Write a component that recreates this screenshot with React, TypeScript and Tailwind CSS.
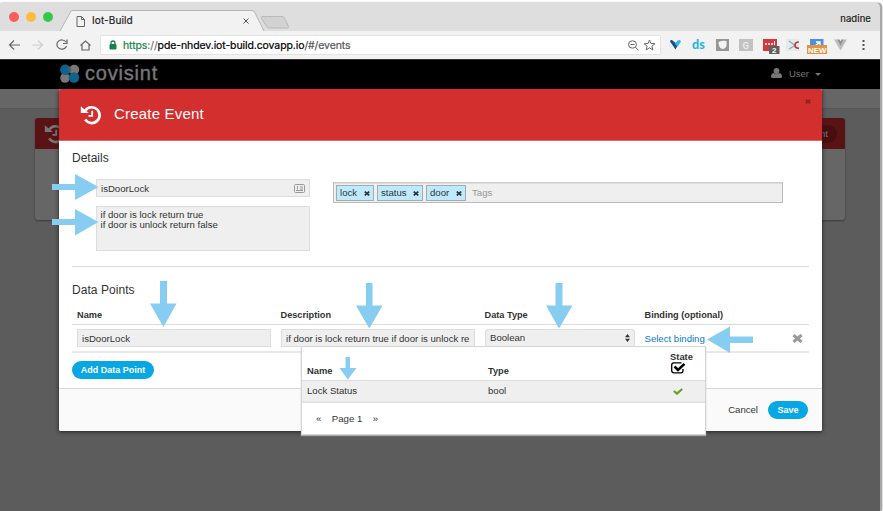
import type { ReactNode } from 'react'

const TAGS = [
  { label: 'lock', width: 'w-[38px]' },
  { label: 'status', width: 'w-[46px]' },
  { label: 'door', width: 'w-[40px]' },
]

// Callout arrows, drawn over the dialog
const ARROWS = [
  '52,184 75,184 75,174 98.5,187 75,200 75,190 52,190',
  '52,219 75,219 75,209 98.5,222 75,235.500 75,225 52,225',
  '160,281 167,281 167,303.500 176.500,303.500 163.500,327 150,303.500 160,303.500',
  '366,283 372.500,283 372.500,305.500 382.500,305.500 369.300,328.500 356,305.500 366,305.500',
  '555.500,283 562.500,283 562.500,305.500 572.500,305.500 559,328.500 546,305.500 555.500,305.500',
  '345.500,357 350,357 350,368 356.500,368 347.800,379.500 339.500,368 345.500,368',
  '707,339.500 730,326.500 730,336.500 753,336.500 753,343 730,343 730,353',
]

function HistoryIcon({ className }: { className?: string }) {
  return (
    <svg viewBox="0 0 22 20" className={className} fill="none" stroke="currentColor">
      <path d="M5.400 5.400A7.900 7.900 0 1 1 5.200 14.600" strokeWidth="2.700" />
      <path d="M.8 1.300v6.700h8z" fill="currentColor" stroke="none" />
      <path d="M12.200 5.800v5H8.500" strokeWidth="1.800" />
    </svg>
  )
}

function CloseIcon({ className }: { className?: string }) {
  return (
    <svg viewBox="0 0 12 10" className={className} fill="none" stroke="currentColor" strokeWidth="3.400">
      <path d="m1.500 1.200 9 7.600m0-7.600-9 7.600" />
    </svg>
  )
}

function BrowserTabs() {
  return (
    <div className="relative flex h-[28px] items-center bg-[#dedede] text-[10px] text-[#222]">
      <svg className="absolute inset-0 h-[28px] w-[300px]" viewBox="0 0 300 28" fill="none">
        <path d="M60 28 70.500 9Q71 7.500 73 7.500H252Q254 7.500 254.500 9L264 28z" fill="#f2f2f2" />
        <path d="M60 28 70.500 9Q71 7.500 73 7.500H252Q254 7.500 254.500 9L264 28" stroke="#b5b5b5" />
        <path d="M262 13.500h20q2 0 2.500 1.500l4 8.500q.5 1.500-1 1.500h-18q-2 0-3-1.500l-5-8q-.8-2 .5-2z" fill="#d2d2d2" stroke="#bababa" />
        <path d="M77 13.500h4.500l3 3v7H77zM81.500 13.500v3h3" stroke="#666" />
        <path d="m243.500 15.500 5 5m0-5-5 5" stroke="#555" />
      </svg>
      <div className="relative ml-[9px] flex gap-[7px]">
        <span className="size-[10px] rounded-full bg-[#fc5b57]" />
        <span className="size-[10px] rounded-full bg-[#fdbc40]" />
        <span className="size-[10px] rounded-full bg-[#34c84a]" />
      </div>
      <span className="relative ml-[39px] pt-[7px] tracking-[0.100px] [-webkit-text-stroke:0.2px]">Iot-Build</span>
      <span className="ml-auto mr-[9px] pt-[4px] text-[9.500px] tracking-[0.100px] [-webkit-text-stroke:0.2px]">nadine</span>
    </div>
  )
}

function Extensions() {
  return (
    <svg className="h-[28px] w-[219px] shrink-0" viewBox="661 31 219 28" fill="none">
      <path d="M671 41.500q0-2 2-1.500l3.500 3 2-1 1.500 1-3.500 6.500z" fill="#15538b" />
      <path d="m676 44 2.500-3.500q2.500-1.500 3.500 1l-3.500 5z" fill="#31b4e8" />
      <text x="693" y="49" fontFamily="Lato" fontWeight="900" fontSize="12.500" fill="#27b5e5">ds</text>
      <rect x="717" y="39" width="13" height="12" fill="#969696" />
      <path d="M719.500 42q4-2 8-1 1 8-4 8-4-1-4-7z" fill="#f3f3f3" />
      <rect x="740" y="39" width="14" height="12" fill="#c2c2c2" />
      <text x="743.500" y="48.500" fontFamily="Roboto" fontWeight="500" fontSize="9.500" fill="#eee">G</text>
      <rect x="764" y="39" width="14" height="12" fill="#d8383a" />
      <path d="M766 44h2m1 0h2m1 0h2" stroke="#f8d7d7" strokeWidth="2" />
      <path d="M775.500 41v4" stroke="#fff" />
      <rect x="770" y="46" width="10.500" height="8" fill="#606060" />
      <text x="773" y="53" fontFamily="Liberation Sans" fontWeight="700" fontSize="8" fill="#fff">2</text>
      <rect x="787" y="39" width="13" height="12" fill="#e3ebee" />
      <path d="m790 41 6 4.500m-6 3.500 6-3.500" stroke="#9ba9b2" strokeWidth="1.300" />
      <path d="M800 42q-4 0-4 3.300 0 3 4 3" stroke="#b93b3e" strokeWidth="1.700" />
      <rect x="811" y="39" width="13.500" height="8" fill="#4a91e5" />
      <path d="m816 46 5-4m-4 0h4v3" stroke="#fff" strokeWidth="1.300" />
      <rect x="808" y="45" width="20" height="9" fill="#e6913d" />
      <text x="809" y="52.500" fontFamily="Liberation Sans" fontWeight="700" fontSize="7.900" fill="#fff">NEW</text>
      <path d="M835 39.500h4l2.500 5 2.500-5h4l-6.500 11z" fill="#bcbcbc" />
      <path d="M838.500 39.500h2l1 2 1-2h2l-3 6z" fill="#8d8d8d" />
      <path d="M864.500 40v2m0 2v2m0 2v2" stroke="#555" strokeWidth="2" />
    </svg>
  )
}

function BrowserToolbar() {
  return (
    <div className="flex h-[29px] items-start border-b border-[#333] bg-[#f2f2f2]">
      <svg className="h-[28px] w-[101px] shrink-0" viewBox="0 31 101 28" fill="none" stroke="#666" strokeWidth="1.200">
        <path d="M20 45H9.500m4.500-4.500L9.500 45l4.500 4.500" />
        <path d="M32.500 45h10M38 40.500l4.500 4.500-4.500 4.500" stroke="#ccc" />
        <path d="M66 42a5 4.600 0 1 0 .6 4M67 39.500v4h-4" />
        <path d="m80.500 45.500 5-4.500 5 4.500M82 45v5h7v-5" />
      </svg>
      <div className="mt-[5px] flex h-[18px] w-[559px] items-center bg-white shadow-[0_0_1px_#999]">
        <svg className="ml-[8px] h-[10px] w-[8px]" viewBox="0 0 8 10">
          <path d="M1 4.500h6V9H1z" fill="#148444" stroke="#148444" />
          <path d="M2 4.500V3q0-2 2-2t2 2v1.500" fill="none" stroke="#148444" strokeWidth="1.300" />
        </svg>
        <span className="ml-[6px] pt-[1px] text-[10.500px] tracking-[-0.100px] text-black [-webkit-text-stroke:0.2px]">
          <span className="text-[#148444]">https</span>
          <span className="text-[#777]">://</span>pde-nhdev.iot-build.covapp.io<span className="text-[#555]">/#/events</span>
        </span>
        <svg className="ml-auto mr-[3px] h-[14px] w-[30px]" viewBox="0 0 30 14" fill="none" stroke="#666">
          <ellipse cx="5.500" cy="6.500" rx="4" ry="3.700" />
          <path d="M3.500 6.500h4M8.500 9.300l3 3" />
          <path d="m22.500 2 1.400 3.500 4 .2-3 2.500 1 3.800-3.400-2.200-3.400 2.200 1-3.800-3-2.500 4-.2z" />
        </svg>
      </div>
      <Extensions />
    </div>
  )
}

function AppNav() {
  return (
    <div className="flex h-[29px] items-center bg-black text-[#777]">
      <svg className="mb-[1px] ml-[59px] h-[20px] w-[21px]" viewBox="0 0 21 20">
        <circle cx="15.200" cy="5.700" r="5" fill="#777" />
        <circle cx="6" cy="14" r="4.800" fill="#777" />
        <circle cx="6.300" cy="5.800" r="5.200" fill="#0c648b" />
        <circle cx="15" cy="13.500" r="5.200" fill="#0c648b" />
        <path d="M10 2a5 5 0 0 1 1 7 5 5 0 0 1-1-7z" fill="#465f6a" />
      </svg>
      <span className="mb-[4px] ml-[5px] text-[20px] leading-none tracking-[0.800px] [-webkit-text-stroke:0.4px]">covisint</span>
      <div className="ml-auto mr-[59px] flex items-center">
        <svg className="mb-[3px] h-[10px] w-[11px]" viewBox="0 0 11 10" fill="currentColor">
          <ellipse cx="5.500" cy="3" rx="2.900" ry="3" />
          <path d="M2.500 5q3 2.200 6 0Q11 5.500 11 8.500q0 1.500-1.500 1.500h-8Q0 10 0 8.500 0 5.500 2.500 5z" />
        </svg>
        <span className="ml-[7px] text-[9.500px]">User</span>
        <svg className="ml-[6px] h-[3px] w-[6px]" viewBox="0 0 6 3" fill="currentColor">
          <path d="M0 0h6L3 3z" />
        </svg>
      </div>
    </div>
  )
}

function Field({ className, children }: { className: string; children: ReactNode }) {
  return (
    <div className={`flex h-[18px] items-center overflow-hidden whitespace-nowrap border border-[#ddd] bg-[#efefef] px-[4px] ${className}`}>
      {children}
    </div>
  )
}

function BindingMenu() {
  return (
    <div className="absolute left-[242px] top-[257px] h-[89px] w-[405px] border border-[#d5d5d5] bg-white shadow-[0_1px_1px_#aaa]">
      <div className="flex h-[34px] border-b border-[#ddd] pl-[5px] font-bold">
        <span className="w-[181px] pt-[18px] text-[9.400px]">Name</span>
        <span className="w-[182px] pt-[18px] text-[9.200px]">Type</span>
        <div className="flex flex-col pt-[4px] leading-[11px]">
          <span className="text-[9.400px]">State</span>
          <svg className="h-[12px] w-[16px]" viewBox="0 0 16 12" fill="none" stroke="#000">
            <path d="M13 7v1.500q0 2.300-2 2.300H4Q1.700 10.800 1.700 8.500v-5.500Q1.700 .8 4 .8h7.500" strokeWidth="1.300" />
            <path d="m4.500 4.500 3.500 3.500L14.500 1.800" strokeWidth="2.500" />
          </svg>
        </div>
      </div>
      <div className="flex h-[22px] items-center border-b-2 border-[#e3e3e3] bg-[#efefef] pl-[5px]">
        <span className="w-[181px]">Lock Status</span>
        <span className="w-[185px]">bool</span>
        <svg className="mt-[1px] h-[7px] w-[10px]" viewBox="0 0 10 7" fill="none" stroke="#62a420" strokeWidth="2.200">
          <path d="m.8 3 3.200 2.600L9.200 1" />
        </svg>
      </div>
      <div className="flex items-center gap-[10.500px] pl-[14px] pt-[10px]">
        <span>«</span>
        <span>Page 1</span>
        <span>»</span>
      </div>
    </div>
  )
}

function CreateEventDialog() {
  return (
    <div className="absolute left-[59px] top-[89px] flex h-[342px] w-[763px] flex-col rounded-[2px] bg-white text-[9.600px] leading-[12px] text-[#333] shadow-[0_1px_4px_#222]">
      <div className="flex h-[52px] items-center rounded-t-[2px] border-b border-[#dd6868] bg-[#d32f2f] text-white">
        <HistoryIcon className="ml-[21px] h-[20px] w-[22px]" />
        <h1 className="mb-[3px] ml-[12px] text-[15px] leading-none tracking-[0.200px]">Create Event</h1>
        <CloseIcon className="mb-[27px] ml-auto mr-[11px] h-[5px] w-[6px] text-[#902020]" />
      </div>

      <div className="flex h-[247px] flex-col px-[13px]">
        <h2 className="mt-[10px] text-[12px] leading-[14px]">Details</h2>
        <div className="mt-[14px] flex h-[72px] items-start">
          <div className="ml-[24px] w-[214px]">
            <Field className="w-[214px] justify-between pt-[1px]">
              isDoorLock
              <svg className="mb-[1px] h-[9px] w-[11px]" viewBox="0 0 11 9" fill="none" stroke="#999">
                <rect x=".5" y=".5" width="10" height="8" rx="1" />
                <path d="M6 3h3M6 5h3M2 6.500h7M3.500 2v3.500" />
              </svg>
            </Field>
            <div className="mt-[9px] h-[45px] w-[214px] border border-[#ddd] bg-[#efefef] px-[3.500px] pt-[3px] leading-[10px]">
              if door is lock return true
              <br />
              if door is unlock return false
            </div>
          </div>
          <div className="ml-[23px] mt-[3px] flex h-[21px] w-[450px] items-center gap-[3px] border border-[#bbb] border-t-[#ccc] bg-[#efefef] pl-[2px] shadow-[inset_0_1px_0_#ddd]">
            {TAGS.map((tag) => (
              <span key={tag.label} className={`flex h-[16px] items-center justify-between border border-[#aaa] bg-[#bdeaff] pl-[3px] pr-[3px] ${tag.width}`}>
                {tag.label}
                <CloseIcon className="mt-[2px] h-[5px] w-[6px]" />
              </span>
            ))}
            <span className="ml-[3px] text-[#999]">Tags</span>
          </div>
        </div>

        <div className="mt-[15px] border-t border-[#ddd]" />
        <h2 className="mt-[16px] text-[12px] leading-[14px] tracking-[0.050px]">Data Points</h2>
        <div className="mt-[12px] flex h-[16px] items-start border-b border-[#ddd] pl-[5px] text-[9.200px] font-bold">
          <span className="w-[203.500px]">Name</span>
          <span className="w-[204px]">Description</span>
          <span className="w-[160px]">Data Type</span>
          <span>Binding (optional)</span>
        </div>
        <div className="flex h-[28px] items-start border-b-2 border-[#e8e8e8] pl-[5px] pt-[4px]">
          <Field className="w-[194px] pt-[1px]">isDoorLock</Field>
          <Field className="ml-[10px] w-[194px] pt-[1px]">if door is lock return true if door is unlock re</Field>
          <Field className="ml-[10px] w-[150px] justify-between rounded-[3px]">
            Boolean
            <svg className="h-[8px] w-[5px]" viewBox="0 0 5 8" fill="#333">
              <path d="M2.500 0 5 3.200H0zM2.500 8 0 4.800h5z" />
            </svg>
          </Field>
          <a className="ml-[9.500px] mt-[4px] text-[#0b78d0]">Select binding</a>
          <CloseIcon className="ml-auto mr-[6px] mt-[5px] h-[9px] w-[11px] text-[#999]" />
        </div>
        <button className="mt-[8px] h-[18px] w-[82px] shrink-0 rounded-full bg-[#06a7e4] text-[9px] font-bold text-white">Add Data Point</button>
      </div>

      <div className="flex flex-1 items-center justify-end gap-[10px] rounded-b-[2px] border-t border-[#d8d8d8] bg-[#fafafa] pr-[14px]">
        <button className="pb-[1px]">Cancel</button>
        <button className="h-[18px] w-[40px] rounded-full bg-[#06a7e4] text-[9px] font-bold text-white">Save</button>
      </div>
      <BindingMenu />
    </div>
  )
}

export default function App() {
  return (
    <div className="relative h-[511px] w-[883px] overflow-hidden bg-white pt-[3px] font-['Liberation_Sans',sans-serif]">
      <div className="flex h-[508px] w-[881px] flex-col overflow-hidden rounded-tr-[4px] border-r border-[#aaa] bg-[#5c5c5c] shadow-[1px_0_2px_#888]">
        <div className="font-['Inter',sans-serif]">
          <BrowserTabs />
          <BrowserToolbar />
        </div>
        <AppNav />
        <div className="h-[20px] shrink-0 border-b border-[#555] bg-[#666]" />
        <div className="ml-[35px] mt-[9px] h-[102px] w-[810px] shrink-0 rounded-[3px] bg-[#666] shadow-[0_1px_2px_#3a3a3a]">
          <div className="flex h-[31px] items-center justify-between rounded-t-[3px] bg-[#5a1314] pl-[9px] pr-[8px] text-[#777]">
            <HistoryIcon className="h-[20px] w-[22px]" />
            <span className="rounded-full bg-[#4a0d0e] px-[9px] py-[3px] text-[9.600px] leading-[12px]">Create Event</span>
          </div>
        </div>
      </div>

      <CreateEventDialog />

      <svg className="pointer-events-none absolute inset-0 h-[511px] w-[883px]" viewBox="0 0 883 511" fill="#87cdf1">
        {ARROWS.map((points) => (
          <polygon key={points} points={points} />
        ))}
      </svg>
    </div>
  )
}
